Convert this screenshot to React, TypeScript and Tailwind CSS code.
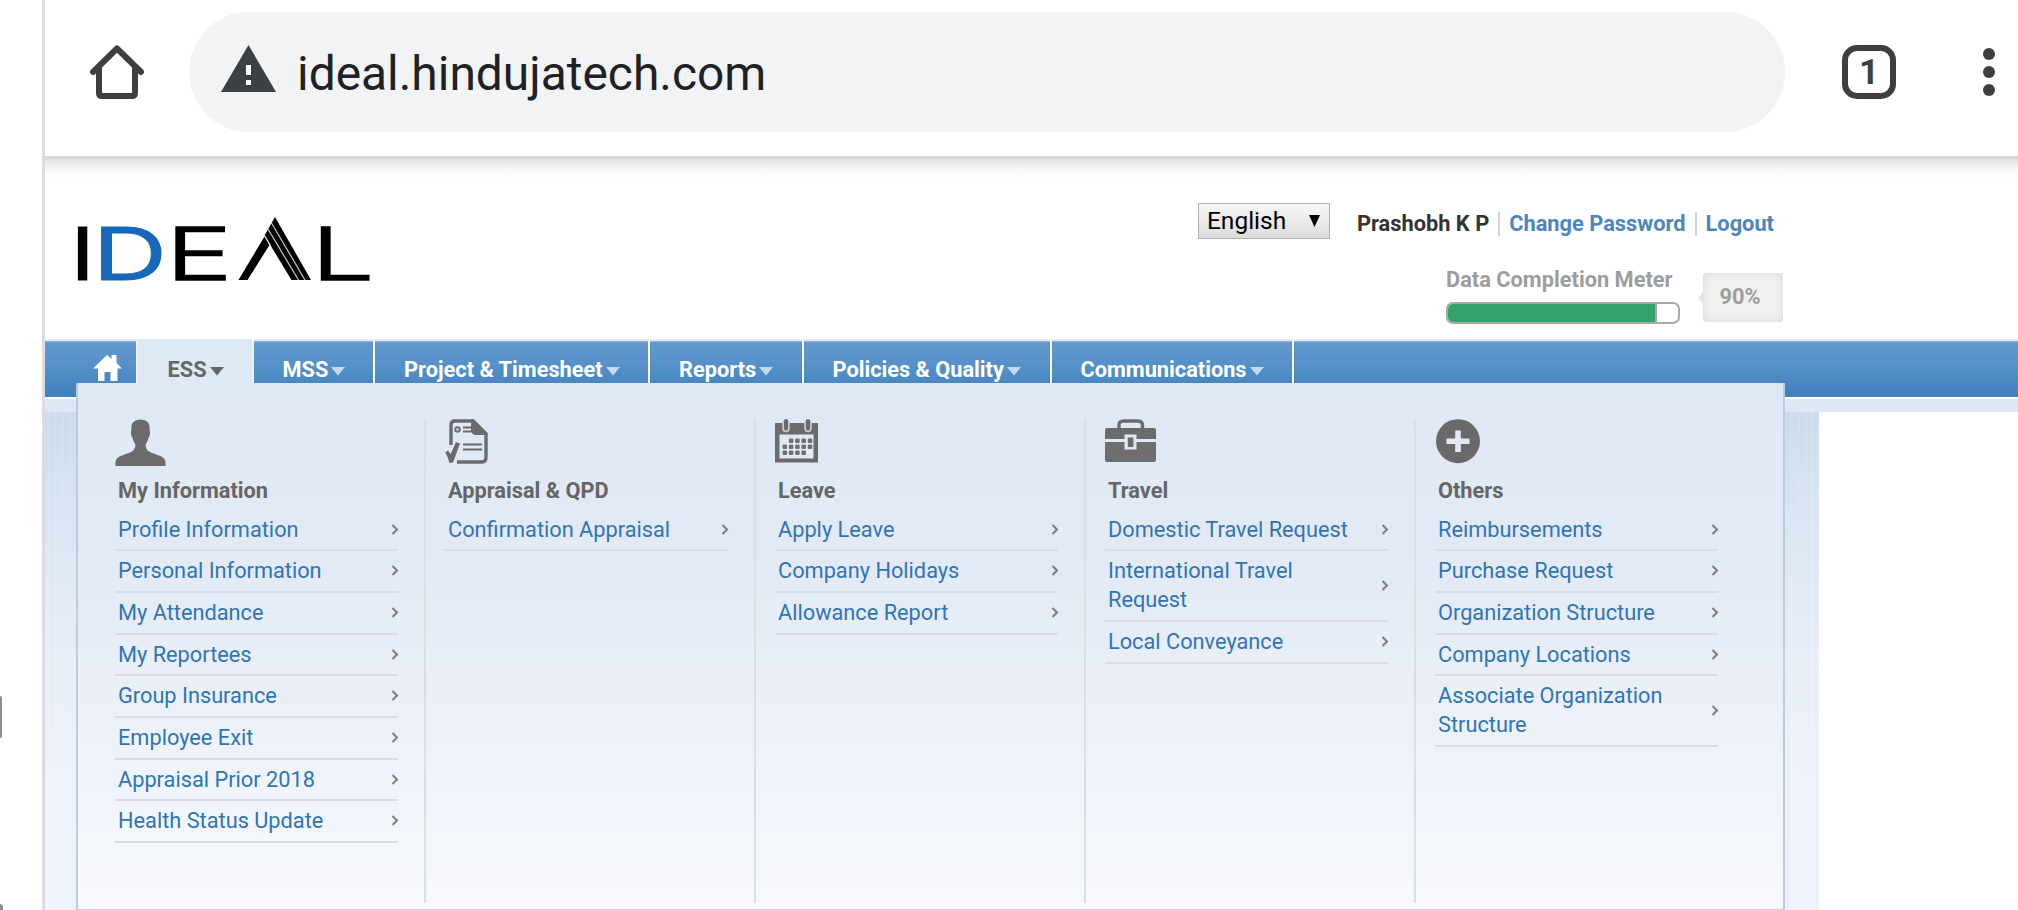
import type { ReactNode } from "react";

type Column = { title: string; icon: ReactNode; items: string[] };

const PersonIcon = () => (
  <svg width="52" height="48" viewBox="0 0 52 48" className="block" fill="#6b6b6b">
    <path d="M25.5 0.5C30.5 0.5 34.5 3.2 34.6 8C34.7 10 34.6 11.5 35 13.5C35.3 16 34.4 17.6 33.6 18.6C33 21.6 31.6 24 30.6 25.6C30.4 28.4 31.6 31 34 32.6C39 35.4 46.5 36.4 49.4 40C50.6 41.8 50.6 44 50.6 47H0.4C0.4 44 0.4 41.8 1.6 40C4.5 36.4 12 35.4 17 32.6C19.4 31 20.6 28.4 20.4 25.6C19.4 24 18 21.6 17.4 18.6C16.6 17.6 15.7 16 16 13.5C16.4 11.5 16.3 10 16.4 8C16.5 3.2 20.5 0.5 25.5 0.5Z" />
  </svg>
);

const AppraisalIcon = () => (
  <svg width="44" height="46" viewBox="0 0 44 46" className="block" fill="none" stroke="#6b6b6b">
    <path d="M6 26V6Q6 2 10 2H28L41 15V38Q41 43 37 43H12" strokeWidth="3.4" />
    <path d="M26 0.5H29L42.5 14V16H30Q26 15 26 11Z" fill="#6b6b6b" stroke="none" />
    <circle cx="12.5" cy="10.5" r="2.2" strokeWidth="2" />
    <path d="M18 8.5H26M18 12.5H27M18 25.5H37M18 30.5H37" strokeWidth="2" />
    <path d="M0.3 33.5L3 31.5L5.6 35L11 23L15 24.5L8 43.5L4.5 44Q3 38 0.3 33.5Z" fill="#6b6b6b" stroke="none" />
  </svg>
);

const dots = [
  [15.5, 22], [21.8, 22], [28.1, 22], [34.4, 22],
  [9.2, 28], [15.5, 28], [21.8, 28], [28.1, 28], [34.4, 28],
  [9.2, 34], [15.5, 34], [21.8, 34], [28.1, 34],
];

const CalendarIcon = () => (
  <svg width="44" height="44" viewBox="0 0 44 44" className="block">
    <path fillRule="evenodd" fill="#6b6b6b" d="M0 4H43V43.500H0ZM4.500 15.500V39.500H38.500V15.500Z" />
    <path d="M11 4V9.500M33 4V9.500" stroke="#c5cbd4" strokeWidth="7.500" strokeLinecap="round" />
    <path d="M11 2V9.500M33 2V9.500" stroke="#6b6b6b" strokeWidth="4" strokeLinecap="round" />
    {dots.map(([x, y], i) => (
      <rect key={i} x={x - 1.7} y={y - 2.4} width="4.600" height="4.400" rx="1.300" fill="#707070" />
    ))}
  </svg>
);

const TravelIcon = () => (
  <svg width="52" height="44" viewBox="0 0 52 44" className="block">
    <path d="M14 10V6.5Q14 2 18.5 2H33Q37.5 2 37.5 6.5V10" fill="none" stroke="#6b6b6b" strokeWidth="3.4" />
    <path d="M2 9H49Q51 9 51 11V20H0V11Q0 9 2 9Z" fill="#6b6b6b" />
    <path d="M0 23H51V41Q51 43 49 43H2Q0 43 0 41Z" fill="#6e6e6e" />
    <rect x="19.5" y="15.5" width="12" height="15" fill="#e0e8f4" />
    <rect x="22.8" y="18.5" width="5.6" height="9.5" fill="#6b6b6b" />
  </svg>
);

const PlusIcon = () => (
  <svg width="46" height="45" viewBox="0 0 46 45" className="block">
    <circle cx="23" cy="22.2" r="22" fill="#696969" />
    <path d="M11.5 22.2H34.5M23 11.5V33" stroke="#e3eaf5" strokeWidth="5.6" />
  </svg>
);

const columns: Column[] = [
  {
    title: "My Information",
    icon: <PersonIcon />,
    items: ["Profile Information", "Personal Information", "My Attendance", "My Reportees", "Group Insurance", "Employee Exit", "Appraisal Prior 2018", "Health Status Update"],
  },
  { title: "Appraisal & QPD", icon: <AppraisalIcon />, items: ["Confirmation Appraisal"] },
  { title: "Leave", icon: <CalendarIcon />, items: ["Apply Leave", "Company Holidays", "Allowance Report"] },
  { title: "Travel", icon: <TravelIcon />, items: ["Domestic Travel Request", "International Travel Request", "Local Conveyance"] },
  {
    title: "Others",
    icon: <PlusIcon />,
    items: ["Reimbursements", "Purchase Request", "Organization Structure", "Company Locations", "Associate Organization Structure"],
  },
];

const tabs = [
  { label: "MSS", width: "w-[121.5px]" },
  { label: "Project & Timesheet", width: "w-[275px]" },
  { label: "Reports", width: "w-[153.5px]" },
  { label: "Policies & Quality", width: "w-[248px]" },
  { label: "Communications", width: "w-[242.5px]" },
];

const Caret = ({ color }: { color: string }) => (
  <svg width="14" height="9" viewBox="0 0 14 9" className="ml-[3px] mt-[8px] shrink-0">
    <path d="M0 0H14L7 8.5Z" fill={color} />
  </svg>
);

const Logo = () => (
  <svg width="300" height="70" viewBox="0 0 300 70" className="block overflow-visible" fontFamily="Inter, sans-serif" fontSize="73.5" fill="#000">
    <text transform="translate(-6.300 63.700) scale(1.200 1)" stroke="#000" strokeWidth="1">I</text>
    <text transform="translate(15.800 63.700) scale(1.400 1)" fill="#1768b8" stroke="#1768b8" strokeWidth="1">D</text>
    <text transform="translate(88.600 63.700) scale(1.530 1)" fontWeight="300" stroke="#000" strokeWidth="1.700" vectorEffect="non-scaling-stroke">E</text>
    <path d="M161.500 64L187.500 20.500L192.500 29L170.500 64Z" />
    <path d="M198 1L234 64H214.500L187.500 19.500Z" />
    <path d="M194.500 7L228 64M191 13L221.500 64M187.500 19.500L193.500 29.500" stroke="#fff" strokeWidth="1.300" opacity="0.750" fill="none" />
    <text transform="translate(234 63.700) scale(1.530 1)" fontWeight="300" stroke="#000" strokeWidth="1.700" vectorEffect="non-scaling-stroke">L</text>
  </svg>
);

const BrowserBar = () => (
  <div className="relative z-10 flex h-[156px] shrink-0 items-start bg-white pl-[45px] pt-[12px]">
    <svg width="54" height="54" viewBox="0 0 54 54" className="mt-[33px] shrink-0" fill="none" stroke="#3c4043" strokeWidth="6" strokeLinejoin="round" strokeLinecap="round">
      <path d="M3 27L27 3.500L51 27" />
      <path d="M9 22V48Q9 51 12 51H42Q45 51 45 48V22" />
    </svg>
    <div className="ml-[45px] flex h-[120px] w-[1596px] shrink-0 items-center rounded-full bg-[#f1f3f5] pl-[32px]">
      <svg width="56" height="47" viewBox="0 0 56 47" className="-mt-[7px] shrink-0">
        <path d="M27.500 0L55 47H0Z" fill="#3c4043" />
        <path d="M25 20H30V30H25ZM25 35H30V40H25Z" fill="#fff" />
      </svg>
      <span className="ml-[20px] mt-[4px] text-[47.900px] leading-[56px] text-[#202124]">ideal.hindujatech.com</span>
    </div>
    <div className="ml-[57px] mt-[33px] flex h-[54px] w-[54px] shrink-0 items-center justify-center rounded-[15px] border-[6px] border-[#3c4043] text-[35px] font-bold leading-none text-[#3c4043]">
      1
    </div>
    <svg width="12" height="48" viewBox="0 0 12 48" className="ml-[87px] mt-[36px] shrink-0" fill="#3c4043">
      <circle cx="6" cy="6" r="6" />
      <circle cx="6" cy="24" r="6" />
      <circle cx="6" cy="42" r="6" />
    </svg>
  </div>
);

const Header = () => (
  <header className="flex h-[183px] shrink-0 flex-col">
    <div className="h-[22px] shrink-0 bg-[linear-gradient(to_bottom,#d3d3d3,#ebebeb_30%,#f6f6f6_60%,#ffffff)]" />
    <div className="flex w-[1738px] justify-between pl-[32px]">
      <div className="pt-[38px]">
        <Logo />
      </div>
      <div className="flex flex-col items-end pt-[25px]">
        <div className="flex items-start pr-[9px] text-[21.800px] font-bold leading-[26px]">
          <div className="flex h-[36px] w-[132px] items-center justify-between border-[1.500px] border-[#b0b0b0] bg-linear-to-b from-[#f8f8f8] to-[#dcdcdc] pl-[8px] pr-[9px] text-[24.500px] font-normal text-black">
            <span className="-mt-px">English</span>
            <svg width="11" height="12" viewBox="0 0 11 12" className="-mt-px">
              <path d="M0 0H11L5.500 12Z" fill="#000" />
            </svg>
          </div>
          <span className="ml-[27px] mt-[8px] text-[#333333]">Prashobh K P</span>
          <span className="ml-[9px] mt-[9px] h-[24px] w-[2px] bg-[#d4d4d4]" />
          <span className="ml-[9px] mt-[8px] text-[#4c86bd]">Change Password</span>
          <span className="ml-[9px] mt-[9px] h-[24px] w-[2px] bg-[#d4d4d4]" />
          <span className="ml-[9px] mt-[8px] text-[#4c86bd]">Logout</span>
        </div>
        <div className="mt-[28px] flex">
          <div className="w-[257px]">
            <div className="text-[21.800px] font-bold leading-[26px] text-[#9d9d9d]">Data Completion Meter</div>
            <div className="mt-[9px] h-[22px] w-[234px] overflow-hidden rounded-[7px] border-2 border-[#a9a9a9] bg-white">
              <div className="h-full w-[209px] border-r-2 border-[#a9a9a9] bg-[#33a469]" />
            </div>
          </div>
          <div className="relative mt-[5.500px] flex h-[49.500px] w-[80px] items-center justify-center rounded-[3px] bg-[#f1f1f1] pr-[6px] pt-px text-[21.800px] font-bold text-[#9d9d9d] shadow-[inset_0_0_8px_#d4d7d7]">
            <svg width="6" height="16" viewBox="0 0 6 16" className="absolute -left-[5px] top-[17px]">
              <path d="M6 0L0.500 8L6 16Z" fill="#e4e6e6" />
            </svg>
            90%
          </div>
        </div>
      </div>
    </div>
  </header>
);

const NavBar = () => (
  <nav className="flex h-[73px] shrink-0 flex-col text-[21.750px] font-bold leading-[26px]">
    <div className="flex h-[58px] border-t-[2px] border-[#e3eaf2] bg-[linear-gradient(to_bottom,#8fb5da_0,#6199cd_2px,#5590c8_45%,#3f80c0)] pl-[32px]">
      <div className="flex w-[61px] border-r-2 border-[#eef4fa] pl-[16px] pt-[13px]">
        <svg width="29" height="28" viewBox="0 0 29 28" fill="#fff">
          <path d="M14 1L18.500 5V1H23.500V9L29 14.500H24.500V27H17.500V18H11.500V27H5V14.500H0Z" />
        </svg>
      </div>
      <div className="-mt-[2px] flex w-[115.500px] border-r-2 border-[#f0f5fb] bg-[#dfe9f5] pl-[29.500px] pt-[20px] text-[#676767]">
        <span className="mt-[-2px]">ESS</span>
        <Caret color="#676767" />
      </div>
      {tabs.map((t) => (
        <div key={t.label} className={`flex shrink-0 whitespace-nowrap border-r-2 border-white pl-[29px] pt-[18px] text-white ${t.width}`}>
          <span className="mt-[-2px]">{t.label}</span>
          <Caret color="#c3dbf1" />
        </div>
      ))}
    </div>
    <div className="h-[2px] bg-white" />
    <div className="h-[13px] bg-[#dde8f4]" />
  </nav>
);

const MenuColumn = ({ column, last }: { column: Column; last: boolean }) => (
  <section className={`h-[484px] w-[330px] shrink-0 pl-[19px] ${last ? "" : "border-r-2 border-[#dadfe4]"}`}>
    <div className="h-[57px]">{column.icon}</div>
    <h2 className="mb-[4.500px] pl-[3px] text-[21.750px] font-bold leading-[29px] text-[#666666]">{column.title}</h2>
    <ul className="w-[283px]">
      {column.items.map((item) => (
        <li key={item} className="flex items-center justify-between border-b-2 border-[#d9dde2] pb-[5.700px] pl-[3px] pt-[5px] text-[21.750px] leading-[29px] text-[#2f75b5]">
          <span className="w-[250px]">{item}</span>
          <svg width="8" height="11" viewBox="0 0 8 11" className="-mr-px shrink-0" fill="none" stroke="#7c7c7c" strokeWidth="2">
            <path d="M1.500 1L6 5.500L1.500 10" />
          </svg>
        </li>
      ))}
    </ul>
  </section>
);

export default function App() {
  return (
    <div className="relative flex h-[910px] w-[2018px] overflow-hidden bg-white font-['Roboto',sans-serif]">
      <div className="w-[45px] shrink-0 border-r-[3px] border-[#dcdce0]" />
      <main className="flex min-w-0 flex-1 flex-col">
        <BrowserBar />
        <Header />
        <NavBar />
        <div className="w-[1774px] flex-1 bg-[repeating-linear-gradient(to_right,#ffffff00_0,#ffffff22_3px,#ffffff00_7px),linear-gradient(to_bottom,#c8daeb,#d6e4f2_20%,#e6edf7_48%,#edf1fb_75%,#edf1fa)]" />
      </main>
      <div className="absolute left-[76px] top-[383px] flex h-[527px] w-[1709px] border-x-2 border-b border-[#b9cce0] bg-[linear-gradient(to_bottom,#dfe9f5,#e0e9f5_12%,#e3eaf5_35%,#ebf0f8_60%,#f1f5fb_80%,#f8f9fd)] pl-[18px] pt-[36px]">
        {columns.map((c, i) => (
          <MenuColumn key={c.title} column={c} last={i === columns.length - 1} />
        ))}
      </div>
      <div className="absolute left-0 top-[696px] h-[42px] w-[2px] rounded-r bg-[#8e8e8e]" />
      <div className="absolute left-0 top-[904px] h-[6px] w-[3px] rounded-tr bg-[#8e8e8e]" />
    </div>
  );
}
